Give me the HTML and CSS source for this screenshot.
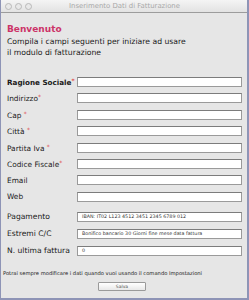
FILE: index.html
```html
<!DOCTYPE html>
<html lang="it">
<head>
<meta charset="utf-8">
<title>Inserimento Dati di Fatturazione</title>
<link rel="stylesheet" href="styles.css">
</head>
<body>
<div class="window">
  <div class="titlebar">
    <div class="lights"><span></span><span></span><span></span></div>
    <div class="title">Inserimento Dati di Fatturazione</div>
  </div>
  <div class="content">
    <h1 class="welcome">Benvenuto</h1>
    <p class="intro">Compila i campi seguenti per iniziare ad usare<br>il modulo di fatturazione</p>
    <div class="fields">
      <label class="label strong">Ragione Sociale<i>*</i></label><div class="input"></div>
      <label class="label">Indirizzo<i>*</i></label><div class="input"></div>
      <label class="label">Cap <i>*</i></label><div class="input"></div>
      <label class="label">Città <i>*</i></label><div class="input"></div>
      <label class="label">Partita Iva <i>*</i></label><div class="input"></div>
      <label class="label">Codice Fiscale<i>*</i></label><div class="input"></div>
      <label class="label">Email</label><div class="input"></div>
      <label class="label">Web</label><div class="input"></div>
    </div>
    <div class="fields extra">
      <label class="label big">Pagamento</label><div class="input small">IBAN: IT02 L123 4512 3451 2345 6789 012</div>
      <label class="label big">Estremi C/C</label><div class="input small">Bonifico bancario 30 Giorni fine mese data fattura</div>
      <label class="label big">N. ultima fattura</label><div class="input small">0</div>
    </div>
    <p class="note">Potrai sempre modificare i dati quando vuoi usando il comando Impostazioni</p>
    <div class="actions"><button class="btn">Salva</button></div>
  </div>
</div>
</body>
</html>
```
FILE: styles.css
```css
html, body {
  margin: 0;
  padding: 0;
}
body {
  width: 249px;
  height: 300px;
  background: #8e94b6;
  font-family: "DejaVu Sans", "Liberation Sans", sans-serif;
  overflow: hidden;
}
.window {
  margin: 0 2px 0 1px;
  height: 298px;
  background: #e6e6e6;
  display: flex;
  flex-direction: column;
}
.titlebar {
  height: 12px;
  border-bottom: 1px solid #9c9c9c;
  background: linear-gradient(#f4f4f4, #e2e2e2);
  display: flex;
  align-items: center;
}
.lights {
  display: flex;
  gap: 3px;
  padding-left: 4px;
}
.lights span {
  width: 5px;
  height: 5px;
  border-radius: 50%;
  border: 1px solid #b8b8b8;
  background: #e8e8e8;
}
.title {
  flex: 1;
  text-align: center;
  font-size: 6.9px;
  color: #a8a8a8;
  margin-right: 30px;
}
.content {
  padding: 0 6px;
  display: flex;
  flex-direction: column;
}
.welcome {
  margin: 10px 0 0;
  font-size: 9px;
  font-weight: bold;
  color: #cc3468;
  line-height: 12px;
}
.intro {
  margin: 2px 0 0;
  font-size: 7.7px;
  line-height: 10.5px;
  color: #1a1a1a;
}
.fields {
  display: grid;
  grid-template-columns: 70px 165px;
  grid-auto-rows: 10px;
  row-gap: 6.4px;
  align-items: center;
  margin-top: 19px;
}
.fields.extra {
  margin-top: 10px;
  row-gap: 7px;
}
.label {
  font-size: 7.4px;
  color: #1a1a1a;
  white-space: nowrap;
}
.label.strong {
  font-weight: bold;
  font-size: 7.2px;
}
.label.big {
  font-size: 7.6px;
}
.label i {
  font-style: normal;
  color: #e04848;
  font-size: 6px;
  vertical-align: 2px;
}
.input {
  height: 10px;
  box-sizing: border-box;
  background: #fff;
  border: 1px solid #9a9a9a;
  border-top-color: #7c7c7c;
}
.input.small {
  font-size: 4.8px;
  color: #333;
  padding-left: 4px;
  line-height: 8px;
  white-space: nowrap;
}
.note {
  margin: 14px 0 0 -4px;
  font-size: 5.2px;
  color: #222;
  white-space: nowrap;
}
.actions {
  display: flex;
  justify-content: center;
  margin-top: 6px;
}
.btn {
  width: 48px;
  height: 9px;
  padding: 0;
  margin-left: -4px;
  font-family: inherit;
  font-size: 4.5px;
  color: #555;
  background: linear-gradient(#ffffff, #e8e8e8);
  border: 1px solid #9a9a9a;
  border-radius: 1px;
}
```
